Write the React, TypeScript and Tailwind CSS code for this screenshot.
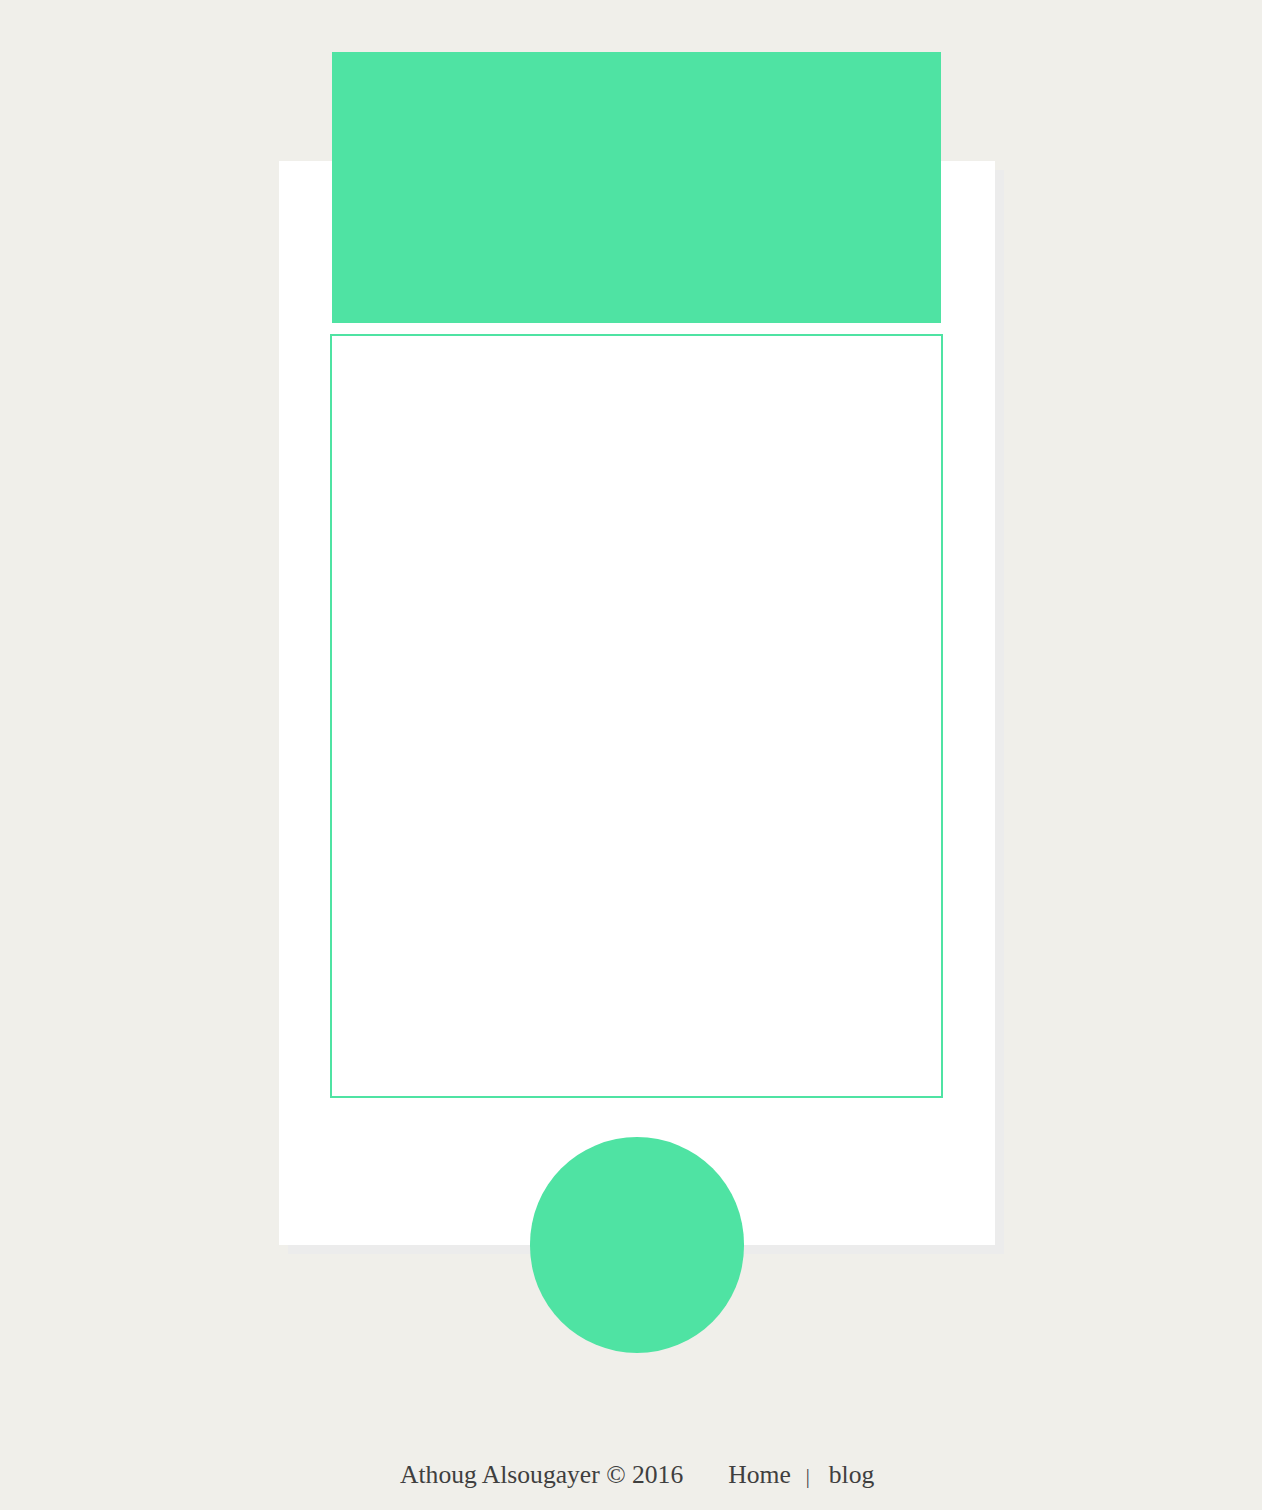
export default function App() {
  return (
    <div className="min-h-[1510px] bg-[#f0efea] pt-[161px]" style={{ fontFamily: '"Liberation Serif", "Times New Roman", serif' }}>
      {/* card */}
      <div className="ml-[279px] flex w-[716px] flex-col items-start bg-white shadow-[9px_9px_0_#ececec]">
        <div className="-mt-[109px] ml-[53px] h-[271px] w-[609px] bg-[#4fe3a3]" />
        <div className="ml-[51px] mt-[11px] h-[764px] w-[613px] border-2 border-[#4fe3a3]" />
        <div className="-mb-[108px] ml-[251px] mt-[39px] h-[216px] w-[214px] rounded-full bg-[#4fe3a3]" />
      </div>

      <footer className="ml-[400px] mt-[215px] flex items-baseline text-[25.6px] leading-[30px] text-[#3f3f3f]">
        <span>Athoug Alsougayer © 2016</span>
        <a className="ml-[45px]">Home</a>
        <span className="ml-[15px] text-[20px] text-[#3f3f3f]">|</span>
        <a className="ml-[19px]">blog</a>
      </footer>
    </div>
  );
}
